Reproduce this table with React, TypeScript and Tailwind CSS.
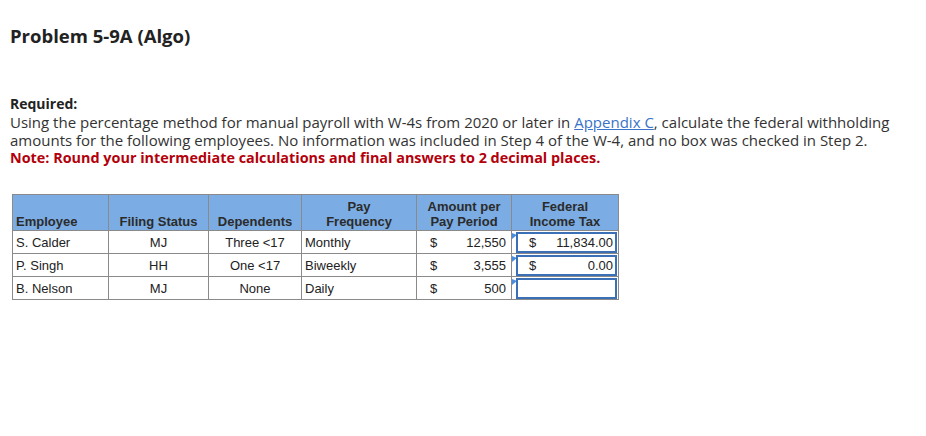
const rows = [
  { name: 'S. Calder', status: 'MJ', deps: 'Three <17', freq: 'Monthly', amount: '12,550', tax: '11,834.00' },
  { name: 'P. Singh', status: 'HH', deps: 'One <17', freq: 'Biweekly', amount: '3,555', tax: '0.00' },
  { name: 'B. Nelson', status: 'MJ', deps: 'None', freq: 'Daily', amount: '500', tax: '' },
]

export default function App() {
  const head = 'border border-[#8a8a8a] bg-[#7badE4] px-[3px] pb-[1px] align-bottom font-bold leading-[15px] text-[#2b2b2b]'
  const cell = 'border border-[#8a8a8a] h-[23px] px-[3px] py-0 leading-[15px]'

  return (
    <div className="h-[436px] w-[926px] bg-white text-[#333]" style={{ fontFamily: '"Open Sans", sans-serif' }}>
      <h1 className="pl-[10px] pt-[24px] text-[18.5px] font-bold leading-[24px] text-[#222]">Problem 5-9A (Algo)</h1>

      <div className="pl-[10px] pt-[47px] text-[15px] leading-[18px]">
        <p className="text-[14px] font-bold text-[#222]">Required:</p>
        <p>
          Using the percentage method for manual payroll with W-4s from 2020 or later in{' '}
          <span className="text-[#3a73c7] underline">Appendix C</span>, calculate the federal withholding
          <br />
          amounts for the following employees. No information was included in Step 4 of the W-4, and no box was checked in Step 2.
        </p>
        <p className="text-[14.4px] font-bold text-[#b3000b]">
          Note: Round your intermediate calculations and final answers to 2 decimal places.
        </p>
      </div>

      <table
        className="ml-[12px] mt-[27px] border-collapse text-[13px]"
        style={{ fontFamily: '"Liberation Sans", Arial, sans-serif' }}
      >
        <thead>
          <tr className="h-[36px]">
            <th className={`${head} w-[96px] text-left`}>Employee</th>
            <th className={`${head} w-[100px] text-center`}>Filing Status</th>
            <th className={`${head} w-[93px] text-center`}>Dependents</th>
            <th className={`${head} w-[115px] text-center`}>Pay<br />Frequency</th>
            <th className={`${head} w-[95px] text-center`}>Amount per<br />Pay Period</th>
            <th className={`${head} w-[107px] text-center`}>Federal<br />Income Tax</th>
          </tr>
        </thead>
        <tbody className="text-[#222]">
          {rows.map((r) => (
            <tr key={r.name} className="h-[23px]">
              <td className={cell}>{r.name}</td>
              <td className={`${cell} text-center`}>{r.status}</td>
              <td className={`${cell} text-center`}>{r.deps}</td>
              <td className={cell}>{r.freq}</td>
              <td className={cell}>
                <div className="flex justify-between pl-[10px] pr-[2px]">
                  <span>$</span>
                  <span>{r.amount}</span>
                </div>
              </td>
              <td className="h-[23px] border border-[#8a8a8a] pl-0 pr-[1px] py-0">
                <div className="flex items-start">
                  <svg className="mt-[1px] mr-[-1px] shrink-0" width="5" height="7" viewBox="0 0 5 7">
                    <polygon points="0,0 5,2 0,6" fill="#4a8ee0" />
                  </svg>
                  <div className="flex h-[21px] flex-1 items-center justify-between border-2 border-[#3b6fb6] pl-[11px] pr-[2px] leading-[15px]">
                    {r.tax && <span>$</span>}
                    <span>{r.tax}</span>
                  </div>
                </div>
              </td>
            </tr>
          ))}
        </tbody>
      </table>
    </div>
  )
}
